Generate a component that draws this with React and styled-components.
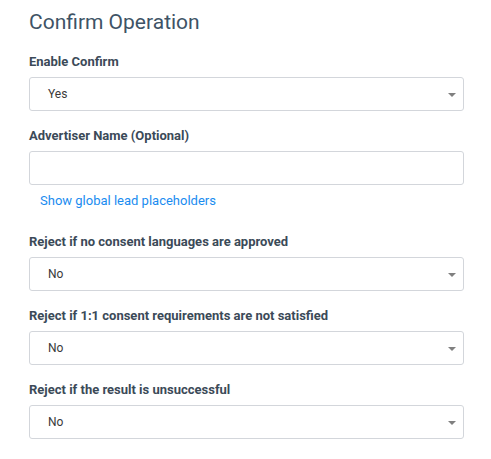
import React from "react";
import styled, { createGlobalStyle } from "styled-components";

const Global = createGlobalStyle`
  html, body { margin: 0; padding: 0; background: #fff; }
  body { font-family: Roboto, "Liberation Sans", Arial, sans-serif; }
  * { box-sizing: border-box; }
`;

const Page = styled.div`
  padding: 10px 27px 0 29px;
  width: 491px;
`;

const Title = styled.h2`
  margin: 0 0 19px 0;
  font-size: 21px;
  line-height: 25px;
  font-weight: 400;
  color: #3e5366;
`;

const Field = styled.div`
  display: flex;
  flex-direction: column;
  gap: 7px;
  margin-top: ${(p) => p.$mt || 0}px;
  margin-bottom: ${(p) => (p.$mb != null ? p.$mb : 17)}px;
`;

const Label = styled.label`
  font-size: 13px;
  line-height: 16px;
  font-weight: 700;
  color: #3b4a58;
`;

const Box = styled.div`
  position: relative;
  height: 34px;
  border: 1px solid #d3d6db;
  border-radius: 3px;
  background: #fff;
  display: flex;
  align-items: center;
  padding-left: 18px;
  padding-bottom: 1px;
  font-size: 12px;
  color: #3a3a3a;
`;

const Arrow = styled.span`
  position: absolute;
  right: 7px;
  top: 15px;
  width: 0;
  height: 0;
  border-left: 4px solid transparent;
  border-right: 4px solid transparent;
  border-top: 4px solid #808080;
`;

const Link = styled.a`
  display: block;
  margin: 8px 0 0 11px;
  font-size: 13px;
  line-height: 16px;
  color: #1a8cf0;
  text-decoration: none;
`;

const Select = ({ value }) => (
  <Box>
    {value}
    <Arrow />
  </Box>
);

export default function App() {
  return (
    <>
      <Global />
      <Page>
        <Title>Confirm Operation</Title>
        <Field>
          <Label>Enable Confirm</Label>
          <Select value="Yes" />
        </Field>
        <Field $mb={0}>
          <Label>Advertiser Name (Optional)</Label>
          <Box />
        </Field>
        <Link href="#">Show global lead placeholders</Link>
        <Field $mt={25}>
          <Label>Reject if no consent languages are approved</Label>
          <Select value="No" />
        </Field>
        <Field>
          <Label>Reject if 1:1 consent requirements are not satisfied</Label>
          <Select value="No" />
        </Field>
        <Field>
          <Label>Reject if the result is unsuccessful</Label>
          <Select value="No" />
        </Field>
      </Page>
    </>
  );
}
